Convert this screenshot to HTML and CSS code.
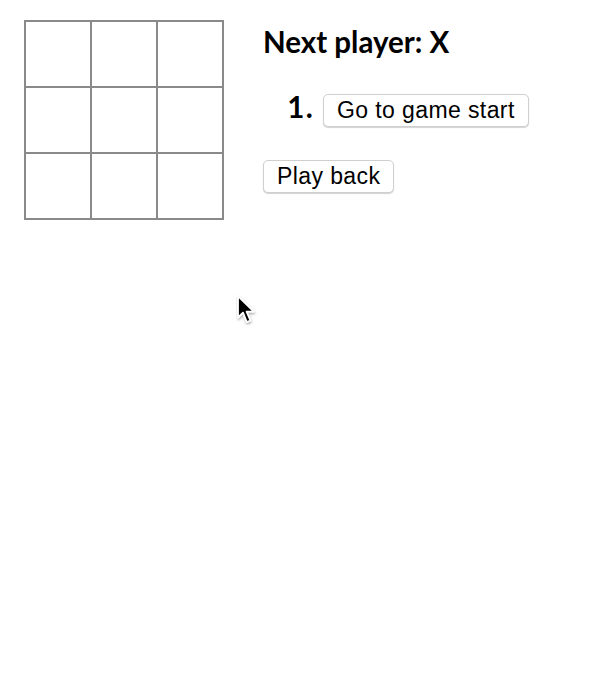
FILE: index.html
```html
<!DOCTYPE html>
<html>
<head>
<meta charset="utf-8">
<link rel="stylesheet" href="styles.css">
</head>
<body>
<div class="game">
  <div class="board">
    <button class="square"></button>
    <button class="square"></button>
    <button class="square"></button>
    <button class="square"></button>
    <button class="square"></button>
    <button class="square"></button>
    <button class="square"></button>
    <button class="square"></button>
    <button class="square"></button>
  </div>
  <div class="game-info">
    <div class="status">Next player: X</div>
    <ol class="moves">
      <li><button class="btn">Go to game start</button></li>
    </ol>
    <button class="btn">Play back</button>
  </div>
</div>
<svg class="cursor" width="26" height="36" viewBox="0 0 26 36">
  <defs>
    <filter id="sh" x="-30%" y="-30%" width="160%" height="160%">
      <feDropShadow dx="0.5" dy="1.5" stdDeviation="1" flood-color="#000" flood-opacity="0.35"/>
    </filter>
  </defs>
  <path d="M2 2 L2 23.5 L7 18.6 L10.8 28 L14.4 26.5 L10.6 17.6 L17.8 17.6 Z" fill="#000" stroke="#fff" stroke-width="1.8" stroke-linejoin="round" filter="url(#sh)"/>
</svg>
</body>
</html>
```

FILE: styles.css
```css
html, body {
  margin: 0;
  padding: 0;
  background: #fff;
}

body {
  font-family: "Lato", "Liberation Sans", sans-serif;
  color: #000;
}

.game {
  display: flex;
  align-items: flex-start;
  padding: 20px 0 0 24px;
}

.board {
  display: grid;
  grid-template-columns: repeat(3, 64px);
  grid-template-rows: repeat(3, 64px);
  gap: 2px;
  padding: 2px;
  background: #8a8a8a;
}

.square {
  background: #fff;
  border: none;
  margin: 0;
  padding: 0;
}

.game-info {
  margin-left: 39px;
  font-size: 29.5px;
  font-weight: 700;
}

.status {
  line-height: 40px;
  margin-top: 2px;
  margin-bottom: 28px;
}

.moves {
  margin: 0 0 28px 0;
  padding-left: 60px;
}

.moves li {
  line-height: 33px;
}

.moves li::marker {
  letter-spacing: 1.5px;
}

.btn {
  font-family: "Liberation Sans", Arial, sans-serif;
  font-size: 23px;
  font-weight: 400;
  letter-spacing: 0.4px;
  height: 33px;
  padding: 0 13px;
  background: #fff;
  color: #000;
  border: 1px solid #cfcfcf;
  border-radius: 5px;
  box-shadow: 0 1px 1px rgba(0, 0, 0, 0.18);
  vertical-align: middle;
}

.cursor {
  position: absolute;
  left: 236px;
  top: 294px;
}
```
